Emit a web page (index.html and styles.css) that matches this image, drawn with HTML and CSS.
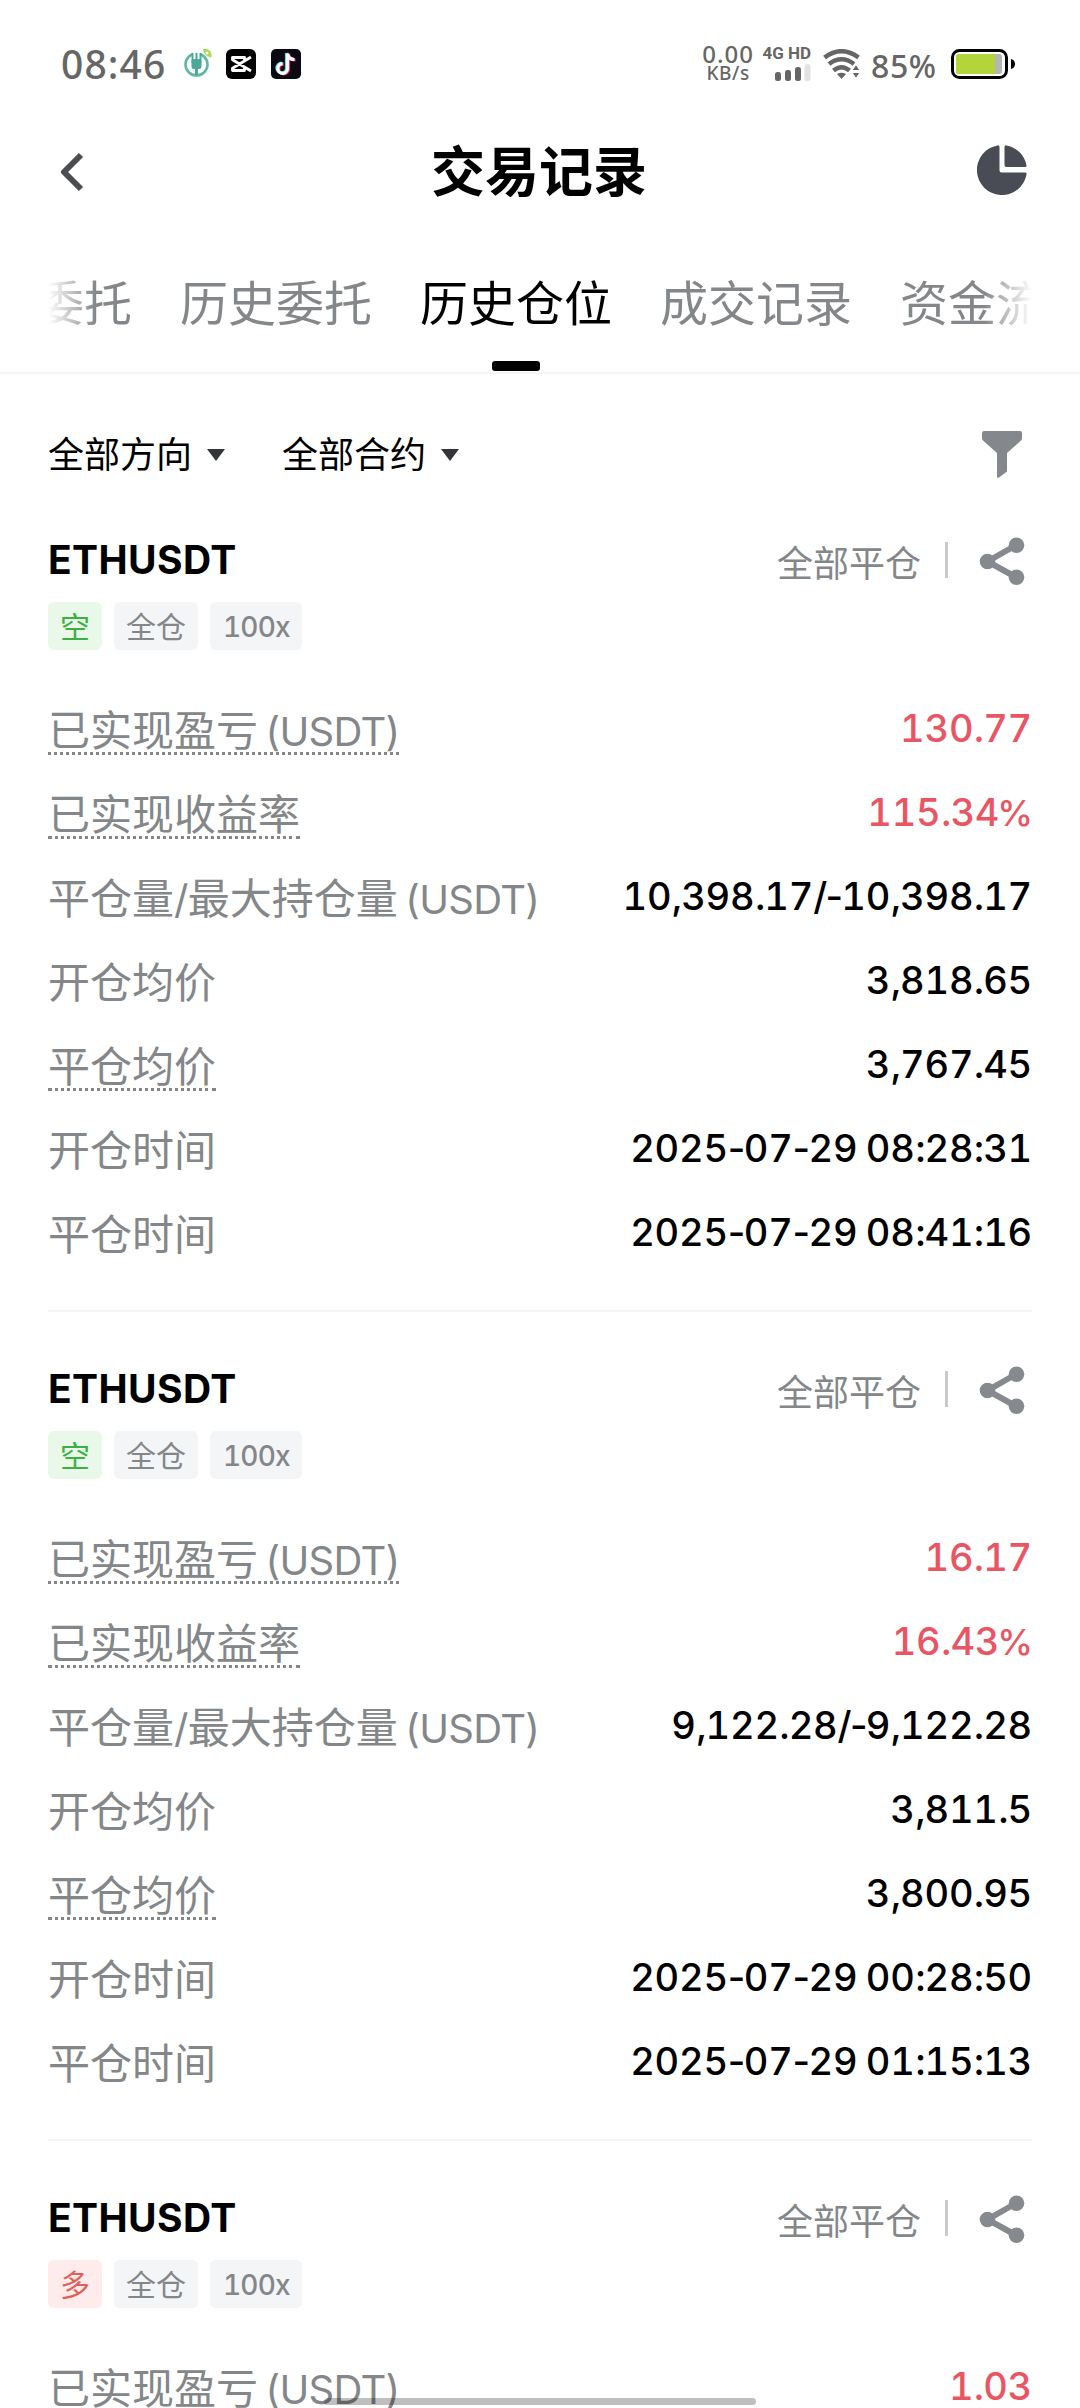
FILE: index.html
```html
<!DOCTYPE html>
<html lang="zh-CN">
<head>
  <meta charset="UTF-8">
  <title>交易记录</title>
  <link rel="stylesheet" href="styles.css">
</head>
<body>

  <div class="status-bar">
    <span class="time">08:46</span>
    <svg class="app-icon" width="30" height="30" viewBox="0 0 30 30">
      <circle cx="12.500" cy="15.500" r="11" fill="none" stroke="#5db8a8" stroke-width="2.600"/>
      <path d="M8 3h9v8H8z" fill="#fff"/>
      <path d="M12.500 12v14" stroke="#4aa79a" stroke-width="3"/>
      <path d="M8.500 4v10M12.500 4v9M16.500 4v10" stroke="#4aa79a" stroke-width="2"/>
      <rect x="7.500" y="10" width="10" height="10" rx="2.500" fill="#4aa79a"/>
      <path d="M19 0q9-1 8.500 8.500q-8-1-8.500-8.500z" fill="#a9d84a"/>
      <circle cx="23" cy="4" r="1.500" fill="#fff"/>
    </svg>
    <svg class="app-icon" width="30" height="30" viewBox="0 0 30 30">
      <rect width="30" height="30" rx="6" fill="#000"/>
      <path d="M18.500 11V8.500H6.500v2.300L25 22M18.500 19v2.500H6.500v-2.300L25 8" fill="none" stroke="#fff" stroke-width="2.800" stroke-linejoin="round"/>
    </svg>
    <svg class="app-icon" width="30" height="30" viewBox="0 0 30 30">
      <rect width="30" height="30" rx="5" fill="#0b0a14"/>
      <g fill="none" stroke-width="3.200">
        <path d="M15.500 4v15a4.800 4.800 0 1 1-4.800-4.800M15.500 4c.5 4 3 6 7 6" stroke="#3ee0dc"/>
        <path d="M17.500 5v15a4.800 4.800 0 1 1-4.800-4.800M17.500 5c.5 4 3 6 7 6" stroke="#f2295b"/>
        <path d="M16.500 4.500v15a4.800 4.800 0 1 1-4.800-4.800M16.500 4.500c.5 4 3 6 7 6" stroke="#fff"/>
      </g>
    </svg>

    <div class="net-speed">
      <span class="speed">0.00</span>
      <span class="unit">KB/s</span>
    </div>
    <div class="signal">
      <span class="net-type">4G HD</span>
      <svg width="36" height="17" viewBox="0 0 36 17">
        <g fill="#666">
          <rect x="0" y="8" width="6" height="9" rx="2.500"/>
          <rect x="10" y="6" width="6" height="11" rx="2.500"/>
          <rect x="20" y="3" width="6" height="14" rx="2.500"/>
        </g>
        <rect x="29.500" y="0" width="6" height="17" rx="2.500" fill="#e2e2e2"/>
      </svg>
    </div>
    <svg class="wifi" width="38" height="30" viewBox="0 0 38 30">
      <g fill="none" stroke="#666" stroke-width="4.600">
        <path d="M1.500 8.500q17-12.500 34 0"/>
        <path d="M6 15q12.500-9.500 25 0"/>
        <path d="M10.500 21.500q8-6.500 16 0"/>
      </g>
      <path d="M14 25q4.500-2.500 9 0l-4.500 5z" fill="#666"/>
      <path d="M29 21.500l4-6 4 6zM29 23.500h8l-4 6z" fill="#666" stroke="#fff"/>
    </svg>
    <span class="percent">85%</span>
    <svg class="battery" width="65" height="30" viewBox="0 0 65 30">
      <rect x="1.500" y="1.500" width="54" height="27" rx="7" fill="#fff" stroke="#000" stroke-width="3"/>
      <rect x="5" y="5" width="46" height="20" rx="2.500" fill="#b4b6b8"/>
      <path d="M7.500 5H44v20H7.500Q5 25 5 22.500v-15Q5 5 7.500 5z" fill="#b4d53a"/>
      <path d="M60 10q4 1 4 5t-4 5z" fill="#000"/>
    </svg>
  </div>

  <header class="nav">
    <svg class="back" width="24" height="40" viewBox="0 0 24 40">
      <path d="M21 3L4 20l17 17" fill="none" stroke="#4b4d50" stroke-width="6" stroke-linejoin="round"/>
    </svg>
    <h1>交易记录</h1>
    <svg class="pie" width="50" height="50" viewBox="0 0 50 50">
      <g fill="#4a4c55">
        <path d="M22.500 2V25.500q0 2 2 2H48Q50 27.500 49.500 29.500A25 25 0 1 1 20.500.4Q22.500 0 22.500 2z"/>
        <path d="M27.500 2Q27.500 0 29.500.4A25 25 0 0 1 49.500 20.500Q50 22 48 22H29.500q-2 0-2-2z"/>
      </g>
    </svg>
  </header>

  <nav class="tabs">
    <div class="tab-list">
      <span class="tab">当前委托</span>
      <span class="tab">历史委托</span>
      <span class="tab active">历史仓位</span>
      <span class="tab">成交记录</span>
      <span class="tab">资金流水</span>
    </div>
  </nav>

  <div class="filters">
    <span class="filter">全部方向</span>
    <span class="filter">全部合约</span>
    <svg class="funnel" width="40" height="47" viewBox="0 0 40 47">
      <path d="M2 0H38Q40 0 40 2V7Q40 8.500 39 9.500L25 22V40.500L17 46.500Q15 47.500 15 45.500V22L1 9.500Q0 8.500 0 7V2Q0 0 2 0z" fill="#84878c"/>
    </svg>
  </div>

  <div id="positionList"></div>

  <div class="home-indicator"></div>

  <script>
    const positions = [
      {
        symbol: 'ETHUSDT', side: '空', sideClass: 'short',
        pnl: '130.77', roi: '115.34%', size: '10,398.17/-10,398.17',
        open: '3,818.65', close: '3,767.45',
        openTime: '2025-07-29 08:28:31', closeTime: '2025-07-29 08:41:16'
      },
      {
        symbol: 'ETHUSDT', side: '空', sideClass: 'short',
        pnl: '16.17', roi: '16.43%', size: '9,122.28/-9,122.28',
        open: '3,811.5', close: '3,800.95',
        openTime: '2025-07-29 00:28:50', closeTime: '2025-07-29 01:15:13'
      },
      {
        symbol: 'ETHUSDT', side: '多', sideClass: 'long',
        pnl: '1.03'
      }
    ];

    // label, key, dotted underline, profit colour
    const fields = [
      ['已实现盈亏<span class="coin"> (USDT)</span>', 'pnl', true, true],
      ['已实现收益率', 'roi', true, true],
      ['平仓量<span class="coin">/</span>最大持仓量<span class="coin"> (USDT)</span>', 'size', false, false],
      ['开仓均价', 'open', false, false],
      ['平仓均价', 'close', true, false],
      ['开仓时间', 'openTime', false, false],
      ['平仓时间', 'closeTime', false, false]
    ];

    // digits are tabular, punctuation keeps its own width
    function formatValue(value) {
      return value.replace(/[^0-9]+/g, s => `<span class="sep ${s === '%' ? 'pct' : ''}">${s}</span>`);
    }

    function renderPositions() {
      const list = document.getElementById('positionList');
      positions.forEach(item => {
        const rows = fields.filter(f => item[f[1]]).map(f => `
          <div class="row">
            <span class="label ${f[2] ? 'dotted' : ''}">${f[0]}</span>
            <span class="value ${f[3] ? 'profit' : ''}">${formatValue(item[f[1]])}</span>
          </div>`).join('');
        const card = document.createElement('div');
        card.className = 'position';
        card.innerHTML = `
          <div class="position-head">
            <span class="symbol">${item.symbol}</span>
            <span class="state">全部平仓</span>
            <span class="line"></span>
            <svg width="60" height="52" viewBox="0 0 60 52">
              <path d="M44.500 11L15.500 27.500 44.500 43.500" fill="none" stroke="#868a8e" stroke-width="6"/>
              <g fill="#868a8e">
                <circle cx="44.500" cy="11.300" r="7.800"/>
                <circle cx="15.500" cy="27.500" r="7.800"/>
                <circle cx="44.500" cy="43.300" r="7.800"/>
              </g>
            </svg>
          </div>
          <div class="tags">
            <span class="tag ${item.sideClass}">${item.side}</span>
            <span class="tag">全仓</span>
            <span class="tag lever">100x</span>
          </div>
          <div class="rows">${rows}</div>`;
        list.appendChild(card);
      });
    }

    renderPositions();
  </script>

</body>
</html>
```
FILE: styles.css
```css
* {
  box-sizing: border-box;
}

body {
  margin: 0;
  height: 2408px;
  overflow: hidden;
  background: #fff;
  color: #000;
  font-family: "Noto Sans CJK SC", sans-serif;
}

svg {
  display: block;
  flex: none;
}

/* status bar */
.status-bar {
  display: flex;
  align-items: center;
  height: 128px;
  padding: 0 64px 0 61px;
  color: #666;
  font-family: "Noto Sans", sans-serif;
  font-weight: 550;
}

.time {
  width: 123px;
  margin-top: -2px;
  font-size: 39px;
  letter-spacing: 1.1px;
}

.app-icon {
  margin-right: 15px;
}

.app-icon:nth-child(2) {
  margin-right: 12px;
}

.net-speed {
  display: flex;
  flex-direction: column;
  align-items: center;
  margin: -2px 9px 0 auto;
}

.speed {
  font-size: 24px;
  line-height: 21px;
  letter-spacing: 1px;
}

.unit {
  font-size: 19px;
  line-height: 19px;
  letter-spacing: 0.6px;
}

.signal {
  display: flex;
  flex-direction: column;
  align-items: flex-end;
  gap: 4px;
  width: 48px;
  margin-right: 12px;
}

.net-type {
  font-family: Roboto, sans-serif;
  font-size: 17px;
  font-weight: 700;
  line-height: 13px;
  white-space: nowrap;
}

.percent {
  width: 80px;
  margin-left: 10px;
  padding-top: 3px;
  font-size: 32px;
  letter-spacing: 0.6px;
}

/* header */
.nav {
  display: flex;
  align-items: center;
  justify-content: space-between;
  height: 88px;
  padding: 0 53px 0 60px;
}

.nav h1 {
  margin: -6px 0 0 17px;
  font-size: 54px;
  line-height: 80px;
  font-weight: 700;
}

.pie {
  margin-top: -4px;
}

/* tabs */
.tabs {
  height: 158px;
  padding: 0 48px;
  border-bottom: 2px solid #f5f5f5;
}

.tab-list {
  display: flex;
  justify-content: center;
  gap: 48px;
  height: 156px;
  padding-top: 48px;
  overflow: hidden;
  -webkit-mask-image: linear-gradient(to right, transparent, #000 48px, #000 calc(100% - 48px), transparent);
  mask-image: linear-gradient(to right, transparent, #000 48px, #000 calc(100% - 48px), transparent);
}

.tab {
  flex: none;
  position: relative;
  left: -24px;
  font-size: 48px;
  line-height: 72px;
  color: #848789;
}

.tab.active {
  color: #000;
}

.tab.active::after {
  content: "";
  position: absolute;
  left: 72px;
  bottom: 1px;
  width: 48px;
  height: 10px;
  border-radius: 3px;
  background: #000;
}

/* filters */
.filters {
  display: flex;
  align-items: center;
  height: 109px;
  padding: 47px 58px 0 48px;
}

.filter {
  display: flex;
  align-items: center;
  margin-right: 57px;
  font-size: 36px;
  line-height: 52px;
}

.filter::after {
  content: "";
  margin: 5px 0 0 15px;
  border: 9px solid transparent;
  border-top: 12px solid #333539;
  border-bottom: 0;
}

.funnel {
  margin: 4px 0 0 auto;
}

/* position card */
.position {
  margin: 0 48px;
  padding: 53px 0 36px;
  border-bottom: 2px solid #f5f5f5;
}

.position-head {
  display: flex;
  align-items: center;
  height: 48px;
}

.symbol {
  margin: -2px auto 0 0;
  font-family: Inter, sans-serif;
  font-size: 39px;
  font-weight: 650;
  letter-spacing: 0.4px;
}

.state {
  padding-top: 2px;
  font-size: 36px;
  color: #848789;
}

.line {
  width: 3px;
  height: 36px;
  margin: 0 24px;
  background: #c8c9ca;
}

.tags {
  display: flex;
  gap: 12px;
  margin-top: 18px;
}

.tag {
  height: 48px;
  padding: 0 12px;
  border-radius: 6px;
  background: #f4f5f7;
  color: #848789;
  font-size: 30px;
  line-height: 46px;
}

.tag.short {
  background: #e9f8e9;
  color: #3cb043;
}

.tag.long {
  background: #fdeceb;
  color: #e0605a;
}

.tag.lever {
  width: 92px;
  padding-left: 13px;
  font-family: Inter, sans-serif;
  font-size: 28px;
  font-weight: 500;
  font-variant-numeric: tabular-nums;
  letter-spacing: -0.8px;
  line-height: 50px;
}

.rows {
  margin-top: 36px;
}

.row {
  display: flex;
  align-items: center;
  justify-content: space-between;
  height: 84px;
}

.label {
  height: 51px;
  margin-top: 3px;
  font-size: 42px;
  line-height: 48px;
  color: #848789;
}

.label.dotted {
  border-bottom: 3px dotted #848789;
}

.coin {
  font-family: Inter, sans-serif;
  font-size: 40px;
  letter-spacing: -0.7px;
  word-spacing: -3px;
}

.value {
  font-family: Inter, sans-serif;
  font-size: 38px;
  font-weight: 550;
  font-variant-numeric: tabular-nums;
  letter-spacing: -0.2px;
}

.value.profit {
  color: #e85664;
}

.sep {
  font-variant-numeric: normal;
  letter-spacing: -1.7px;
}

.pct {
  margin-left: -2px;
  letter-spacing: -1px;
  font-size: 36px;
}

.home-indicator {
  position: fixed;
  left: 324px;
  bottom: 3px;
  width: 432px;
  height: 7px;
  border-radius: 4px;
  background: rgba(0, 0, 0, 0.25);
}
```
